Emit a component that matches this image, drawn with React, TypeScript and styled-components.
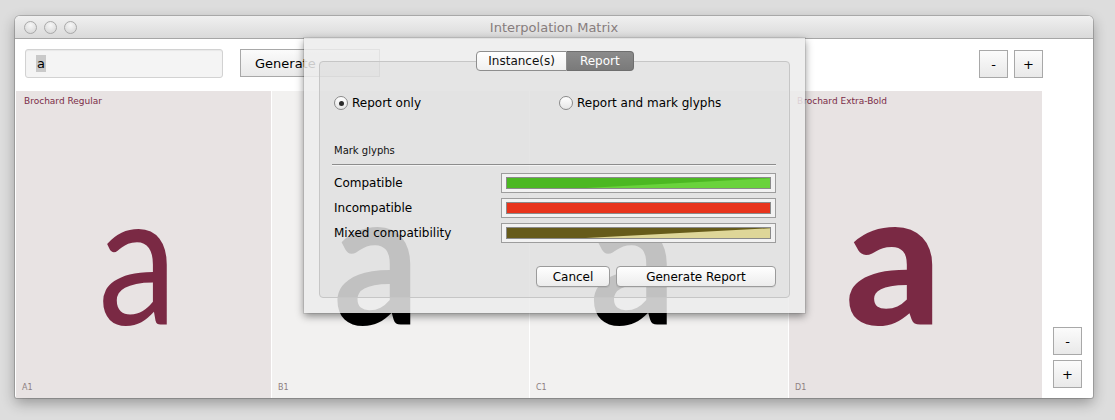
import React from "react";
import styled, { createGlobalStyle } from "styled-components";

const Global = createGlobalStyle`
  html, body { margin: 0; padding: 0; }
  body {
    background: #dddddd;
    font-family: "DejaVu Sans", "Liberation Sans", sans-serif;
    width: 1115px;
    height: 420px;
    overflow: hidden;
  }
`;

const Page = styled.div`
  padding: 16px 0 0 15px;
`;

const Window = styled.div`
  position: relative;
  width: 1078px;
  height: 382px;
  border-radius: 5px 5px 2px 2px;
  background: #ffffff;
  box-shadow: 0 0 0 1px rgba(0,0,0,0.18), 0 5px 14px rgba(0,0,0,0.32);
  display: flex;
  flex-direction: column;
  overflow: visible;
`;

const TitleBar = styled.div`
  height: 22px;
  flex: none;
  border-radius: 5px 5px 0 0;
  background: linear-gradient(#f0f0f0, #dadada);
  border-bottom: 1px solid #a6a6a6;
  display: flex;
  align-items: center;
  position: relative;
  padding-left: 9px;
  gap: 7px;
`;

const Light = styled.span`
  width: 11px;
  height: 11px;
  border-radius: 50%;
  border: 1px solid #a9a9a9;
  background: radial-gradient(circle at 50% 30%, #f7f7f7, #d3d3d3);
`;

const Title = styled.div`
  position: absolute;
  left: 0;
  right: 0;
  top: 0;
  bottom: 0;
  display: flex;
  align-items: center;
  justify-content: center;
  font-size: 13px;
  color: #877d7d;
  pointer-events: none;
`;

const Body = styled.div`
  flex: 1;
  display: flex;
  padding-left: 1px;
`;

const Main = styled.div`
  width: 1027px;
  display: flex;
  flex-direction: column;
`;

const Toolbar = styled.div`
  height: 52px;
  display: flex;
  align-items: flex-start;
  padding: 10px 0 0 9px;
  box-sizing: border-box;
`;

const TextField = styled.div`
  width: 198px;
  height: 29px;
  box-sizing: border-box;
  border: 1px solid #d2d2d2;
  border-radius: 3px;
  background: #f4f4f4;
  box-shadow: inset 0 1px 1px rgba(0,0,0,0.05);
  display: flex;
  align-items: center;
  padding-left: 10px;
  font-size: 13px;
  color: #000;
`;

const Selection = styled.span`
  background: #c9c9c9;
  padding: 1px 1px;
  line-height: 15px;
`;

const SquareButton = styled.div<{ $w: number }>`
  width: ${(p) => p.$w}px;
  height: 28px;
  box-sizing: border-box;
  border: 1px solid #a8a8a8;
  background: linear-gradient(#fbfbfb, #e9e9e9);
  display: flex;
  align-items: center;
  justify-content: center;
  font-size: 13px;
  color: #000;
  flex: none;
`;

const GenerateButton = styled(SquareButton)`
  margin-left: 17px;
  justify-content: flex-start;
  padding-left: 14px;
`;

const Spacer = styled.div`
  flex: 1;
`;

const TopRight = styled.div`
  display: flex;
  gap: 6px;
  margin-right: 0px;
  margin-top: 1px;
`;

const Grid = styled.div`
  flex: 1;
  display: grid;
  grid-template-columns: 255px 257px 258px 253px;
  column-gap: 1px;
`;

const Cell = styled.div<{ $bg: string }>`
  background: ${(p) => p.$bg};
  display: flex;
  flex-direction: column;
  overflow: hidden;
`;

const CellName = styled.div`
  font-size: 9px;
  line-height: 12px;
  height: 12px;
  padding: 4px 0 0 8px;
  color: #7b2c47;
  white-space: nowrap;
`;

const Glyph = styled.div<{ $color: string; $weight: number; $shift: number; $sx: number }>`
  margin-top: 54px;
  font-family: "Lato", "Open Sans", sans-serif;
  font-size: 185px;
  line-height: 185px;
  height: 185px;
  font-weight: ${(p) => p.$weight};
  color: ${(p) => p.$color};
  text-align: center;
  transform: translateX(${(p) => p.$shift}px) scaleX(${(p) => p.$sx});
`;

const CellId = styled.div`
  margin-top: auto;
  font-size: 8px;
  line-height: 12px;
  padding: 0 0 4px 6px;
  color: #8d8081;
`;

const Side = styled.div`
  flex: 1;
  display: flex;
  flex-direction: column;
  justify-content: flex-end;
  align-items: flex-start;
  padding: 0 0 10px 10px;
  gap: 5px;
`;

/* Sheet */
const Sheet = styled.div`
  position: absolute;
  left: 289px;
  top: 22px;
  width: 501px;
  height: 275px;
  box-sizing: border-box;
  background: rgba(236, 236, 236, 0.85);
  box-shadow: 0 3px 8px rgba(0,0,0,0.45), 0 0 0 1px rgba(0,0,0,0.08);
  padding: 13px 15px 15px 15px;
  display: flex;
  flex-direction: column;
  align-items: center;
`;

const Segmented = styled.div`
  display: flex;
  height: 20px;
  position: relative;
  z-index: 1;
  margin-left: 1px;
`;

const Segment = styled.div<{ $active?: boolean; $first?: boolean }>`
  box-sizing: border-box;
  height: 20px;
  padding: 0 ${(p) => (p.$first ? 11 : 13)}px;
  display: flex;
  align-items: center;
  font-size: 12px;
  border: 1px solid ${(p) => (p.$active ? "#6e6e6e" : "#8e8e8e")};
  border-left-width: ${(p) => (p.$first ? 1 : 0)}px;
  border-radius: ${(p) => (p.$first ? "4px 0 0 4px" : "0 4px 4px 0")};
  background: ${(p) =>
    p.$active ? "linear-gradient(#8b8b8b, #7a7a7a)" : "linear-gradient(#ffffff, #f0f0f0)"};
  color: ${(p) => (p.$active ? "#ffffff" : "#111")};
`;

const GroupBox = styled.div`
  align-self: stretch;
  flex: 1;
  margin-top: -10px;
  border: 1px solid #c6c6c6;
  border-radius: 4px;
  background: rgba(0, 0, 0, 0.04);
  padding: 31px 13px 10px 14px;
  display: flex;
  flex-direction: column;
`;

const RadioRow = styled.div`
  display: flex;
  height: 20px;
  align-items: center;
`;

const RadioItem = styled.label<{ $w: number }>`
  width: ${(p) => p.$w}px;
  display: flex;
  align-items: center;
  gap: 4px;
  font-size: 12px;
  color: #000;
`;

const RadioCircle = styled.span<{ $on?: boolean }>`
  width: 14px;
  height: 14px;
  box-sizing: border-box;
  border-radius: 50%;
  border: 1px solid #8a8a8a;
  background: linear-gradient(#ffffff, #e6e6e6);
  display: flex;
  align-items: center;
  justify-content: center;
  &::after {
    content: "";
    display: ${(p) => (p.$on ? "block" : "none")};
    width: 5px;
    height: 5px;
    border-radius: 50%;
    background: #2a2a2a;
  }
`;

const SectionTitle = styled.div`
  margin-top: 31px;
  font-size: 10px;
  line-height: 14px;
  color: #111;
`;

const Separator = styled.div`
  margin: 6px 0 8px -2px;
  height: 1px;
  background: #8d8d8d;
  box-shadow: 0 1px 0 rgba(255,255,255,0.6);
`;

const ColorRow = styled.div`
  display: flex;
  align-items: center;
  justify-content: space-between;
  height: 20px;
  margin-bottom: 5px;
`;

const RowLabel = styled.div`
  font-size: 12px;
  color: #000;
`;

const Well = styled.div`
  width: 275px;
  height: 20px;
  box-sizing: border-box;
  border: 1px solid #9d9d9d;
  background: #f2f2f2;
  padding: 3px 4px 3px 4px;
  display: flex;
`;

const Swatch = styled.svg`
  flex: 1;
  height: 12px;
  display: block;
  box-sizing: border-box;
  border: 1px solid #8a8a8a;
`;

const ButtonRow = styled.div`
  margin-top: auto;
  display: flex;
  justify-content: flex-end;
  gap: 6px;
`;

const PushButton = styled.div<{ $w: number }>`
  width: ${(p) => p.$w}px;
  height: 21px;
  box-sizing: border-box;
  border: 1px solid #9b9b9b;
  border-radius: 4px;
  background: linear-gradient(#ffffff, #ececec);
  box-shadow: 0 1px 0 rgba(0,0,0,0.06);
  display: flex;
  align-items: center;
  justify-content: center;
  font-size: 12px;
  color: #000;
`;

const ColorSwatch = ({ dark, light }: { dark: string; light: string }) => (
  <Swatch viewBox="0 0 100 10" preserveAspectRatio="none">
    <rect x="0" y="0" width="100" height="10" fill={light} />
    <polygon points="0,0 100,0 100,0.3 30,10 0,10" fill={dark} />
  </Swatch>
);

const FlatSwatch = ({ color }: { color: string }) => (
  <Swatch viewBox="0 0 100 10" preserveAspectRatio="none">
    <rect x="0" y="0" width="100" height="10" fill={color} />
  </Swatch>
);

const cells = [
  { bg: "#e8e3e3", name: "Brochard Regular", id: "A1", color: "#7a2944", weight: 400, shift: -6, sx: 0.86 },
  { bg: "#f2f1f0", name: "", id: "B1", color: "#000000", weight: 700, shift: -24, sx: 0.92 },
  { bg: "#f2f1f0", name: "", id: "C1", color: "#000000", weight: 700, shift: -26, sx: 0.92 },
  { bg: "#e8e3e3", name: "Brochard Extra-Bold", id: "D1", color: "#7a2944", weight: 900, shift: -22, sx: 1.02 },
];

export default function App() {
  return (
    <>
      <Global />
      <Page>
        <Window>
          <TitleBar>
            <Light />
            <Light />
            <Light />
            <Title>Interpolation Matrix</Title>
          </TitleBar>
          <Body>
            <Main>
              <Toolbar>
                <TextField>
                  <Selection>a</Selection>
                </TextField>
                <GenerateButton $w={140}>Generate</GenerateButton>
                <Spacer />
                <TopRight>
                  <SquareButton $w={29}>-</SquareButton>
                  <SquareButton $w={29}>+</SquareButton>
                </TopRight>
              </Toolbar>
              <Grid>
                {cells.map((c) => (
                  <Cell key={c.id} $bg={c.bg}>
                    <CellName>{c.name}</CellName>
                    <Glyph $color={c.color} $weight={c.weight} $shift={c.shift} $sx={c.sx}>
                      a
                    </Glyph>
                    <CellId>{c.id}</CellId>
                  </Cell>
                ))}
              </Grid>
            </Main>
            <Side>
              <SquareButton $w={29}>-</SquareButton>
              <SquareButton $w={29}>+</SquareButton>
            </Side>
          </Body>

          <Sheet>
            <Segmented>
              <Segment $first>Instance(s)</Segment>
              <Segment $active>Report</Segment>
            </Segmented>
            <GroupBox>
              <RadioRow>
                <RadioItem $w={225}>
                  <RadioCircle $on />
                  Report only
                </RadioItem>
                <RadioItem $w={200}>
                  <RadioCircle />
                  Report and mark glyphs
                </RadioItem>
              </RadioRow>
              <SectionTitle>Mark glyphs</SectionTitle>
              <Separator />
              <ColorRow>
                <RowLabel>Compatible</RowLabel>
                <Well>
                  <ColorSwatch dark="#4cb822" light="#6ad33c" />
                </Well>
              </ColorRow>
              <ColorRow>
                <RowLabel>Incompatible</RowLabel>
                <Well>
                  <FlatSwatch color="#e8341c" />
                </Well>
              </ColorRow>
              <ColorRow>
                <RowLabel>Mixed compatibility</RowLabel>
                <Well>
                  <ColorSwatch dark="#665b1a" light="#ded698" />
                </Well>
              </ColorRow>
              <ButtonRow>
                <PushButton $w={74}>Cancel</PushButton>
                <PushButton $w={160}>Generate Report</PushButton>
              </ButtonRow>
            </GroupBox>
          </Sheet>
        </Window>
      </Page>
    </>
  );
}
